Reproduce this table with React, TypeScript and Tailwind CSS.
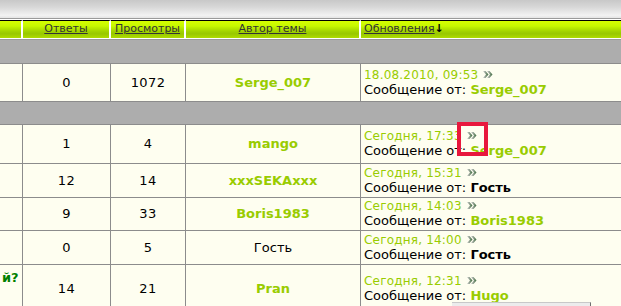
import React from 'react';

type Row = {
  replies: string;
  views: string;
  author: string;
  authorGuest?: boolean;
  date: string;
  by: string;
  byGuest?: boolean;
  h: string;
  first?: React.ReactNode;
};

const Arrow: React.FC = () => (
  <svg width="10" height="7" viewBox="0 0 10 7" className="inline-block ml-[5px] align-[1px]">
    <defs>
      <linearGradient id="arr" x1="0" x2="1" y1="0" y2="0">
        <stop offset="0" stopColor="#d0d0d0" />
        <stop offset="0.45" stopColor="#8f9f8f" />
        <stop offset="1" stopColor="#3c6b3c" />
      </linearGradient>
    </defs>
    <polygon points="0,0 2.5,0 5.5,3.5 2.5,7 0,7 3,3.5" fill="url(#arr)" />
    <polygon points="4,0 6.5,0 9.5,3.5 6.5,7 4,7 7,3.5" fill="url(#arr)" />
  </svg>
);

const rows: Row[] = [
  { replies: '1', views: '4', author: 'mango', date: 'Сегодня, 17:33', by: 'Serge_007', h: 'h-[39px]' },
  { replies: '12', views: '14', author: 'xxxSEKAxxx', date: 'Сегодня, 15:31', by: 'Гость', byGuest: true, h: 'h-[34px]' },
  { replies: '9', views: '33', author: 'Boris1983', date: 'Сегодня, 14:03', by: 'Boris1983', h: 'h-[33px]' },
  { replies: '0', views: '5', author: 'Гость', authorGuest: true, date: 'Сегодня, 14:00', by: 'Гость', byGuest: true, h: 'h-[34px]' },
  {
    replies: '14',
    views: '21',
    author: 'Pran',
    date: 'Сегодня, 12:31',
    by: 'Hugo',
    h: 'h-[49px]',
    first: <span className="font-bold text-[#008000] text-[13px]">й?</span>,
  },
];

const Updated: React.FC<{ date: string; by: string; guest?: boolean }> = ({ date, by, guest }) => (
  <div className="flex-1 flex flex-col justify-center pl-[3px] whitespace-nowrap">
    <div className="text-[#99cc00] text-[12px] leading-[14px] tracking-[0.2px]">
      {date}
      <Arrow />
    </div>
    <div className="text-black text-[13px] leading-[16px]">
      Сообщение от:{' '}
      <span className={guest ? 'font-bold text-black' : 'font-bold text-[#99cc00]'}>{by}</span>
    </div>
  </div>
);

const BodyRow: React.FC<{ r: Row }> = ({ r }) => (
  <div className={`flex ${r.h} border-b border-[#8c8c8c] bg-[#fefef0]`}>
    <div className="w-[23px] shrink-0 border-r border-[#8c8c8c] overflow-hidden pl-[2px] pt-[5px] leading-[14px]">
      {r.first}
    </div>
    <div className="w-[88px] shrink-0 border-r border-[#8c8c8c] flex items-center justify-center text-[13px] tracking-[0.4px] text-black">
      {r.replies}
    </div>
    <div className="w-[75px] shrink-0 border-r border-[#8c8c8c] flex items-center justify-center text-[13px] tracking-[0.4px] text-black">
      {r.views}
    </div>
    <div className="w-[175px] shrink-0 border-r border-[#8c8c8c] flex items-center justify-center text-[13px]">
      {r.authorGuest ? (
        <span className="text-black">{r.author}</span>
      ) : (
        <span className="font-bold text-[#99cc00]">{r.author}</span>
      )}
    </div>
    <Updated date={r.date} by={r.by} guest={r.byGuest} />
  </div>
);

const green =
  'bg-[linear-gradient(to_bottom,#d6ff00_0%,#c6f800_30%,#a2d400_60%,#98c800_75%,#aedc00_100%)]';

const Head: React.FC<{ w: string; children?: React.ReactNode }> = ({ w, children }) => (
  <div
    className={`${w} shrink-0 h-[18px] border-t border-black border-r-2 border-r-white ${green} flex items-center justify-center text-[11px] text-[#333] underline`}
  >
    {children}
  </div>
);

export default function App() {
  return (
    <div className="w-[621px] h-[306px] overflow-hidden relative bg-[#fefef0] font-['DejaVu_Sans',Verdana,sans-serif]">
      <div className="h-[19px] border-b border-[#9a9a9a] bg-[linear-gradient(to_bottom,#c8c8c8_0%,#d8d8d8_40%,#f2f2f2_85%,#e4e4e4_100%)]" />
      <div className="h-[21px] bg-white py-[1px] border-b border-[#9a9a9a] flex">
        <Head w="w-[23px]" />
        <Head w="w-[88px]">Ответы</Head>
        <Head w="w-[75px]">Просмотры</Head>
        <Head w="w-[175px]">Автор темы</Head>
        <div className={`flex-1 h-[18px] border-t border-black ${green} flex items-center pl-[3px] text-[11px] text-[#333]`}>
          <span className="underline">Обновления</span>
          <span className="font-bold text-black">↓</span>
        </div>
      </div>
      <div className="h-[24px] bg-[#adadad] border-b border-[#8c8c8c]" />
      <div className="flex h-[38px] border-b border-[#8c8c8c] bg-[#fefef0]">
        <div className="w-[23px] shrink-0 border-r border-[#8c8c8c]" />
        <div className="w-[88px] shrink-0 border-r border-[#8c8c8c] flex items-center justify-center text-[13px] tracking-[0.4px]">0</div>
        <div className="w-[75px] shrink-0 border-r border-[#8c8c8c] flex items-center justify-center text-[13px] tracking-[0.4px]">1072</div>
        <div className="w-[175px] shrink-0 border-r border-[#8c8c8c] flex items-center justify-center text-[13px] font-bold text-[#99cc00]">
          Serge_007
        </div>
        <Updated date="18.08.2010, 09:53" by="Serge_007" />
      </div>
      <div className="h-[23px] bg-[#adadad] border-b border-[#8c8c8c]" />
      {rows.map((r, i) => (
        <BodyRow key={i} r={r} />
      ))}
      <div className="absolute left-[452px] top-[302px] w-[139px] h-[8px] bg-[#ececec] border-t border-[#c8c8c8] border-r border-r-[#707070]" />
      <div className="absolute left-[457px] top-[122px] w-[31px] h-[34px] border-4 border-[#e8173d]" />
    </div>
  );
}
